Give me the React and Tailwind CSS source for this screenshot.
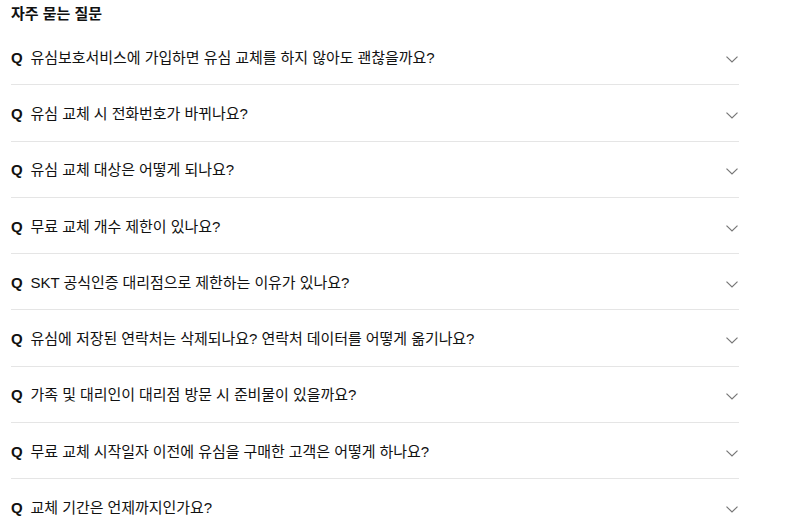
import React from "react";

const questions = [
  "유심보호서비스에 가입하면 유심 교체를 하지 않아도 괜찮을까요?",
  "유심 교체 시 전화번호가 바뀌나요?",
  "유심 교체 대상은 어떻게 되나요?",
  "무료 교체 개수 제한이 있나요?",
  "SKT 공식인증 대리점으로 제한하는 이유가 있나요?",
  "유심에 저장된 연락처는 삭제되나요? 연락처 데이터를 어떻게 옮기나요?",
  "가족 및 대리인이 대리점 방문 시 준비물이 있을까요?",
  "무료 교체 시작일자 이전에 유심을 구매한 고객은 어떻게 하나요?",
  "교체 기간은 언제까지인가요?",
];

const Chevron = () => (
  <svg width="12" height="7" viewBox="0 0 12 7" fill="none" className="shrink-0 mt-[5px] mr-[1px]">
    <path d="M0.5 0.6 L6 6 L11.5 0.6" stroke="#777" strokeWidth="1.2" />
  </svg>
);

const App = () => {
  return (
    <div className="bg-white w-[794px] h-[531px] overflow-hidden pl-[11px] font-['Liberation_Sans','Noto_Sans_CJK_KR',sans-serif] text-[#111]">
      <h2 className="h-[29px] pt-[4px] text-[15px] font-bold leading-[20px]">자주 묻는 질문</h2>
      <div className="w-[728px]">
        {questions.map((q, i) => (
          <div key={i} className="flex items-center justify-between h-[56.3px] border-b border-[#e5e5e5]">
            <div className="flex items-center text-[15px] leading-[20px] pt-[2px] tracking-[-0.06px]">
              <span className="font-bold mr-[8px]">Q</span>
              <span>{q}</span>
            </div>
            <Chevron />
          </div>
        ))}
      </div>
    </div>
  );
};

export default App;
